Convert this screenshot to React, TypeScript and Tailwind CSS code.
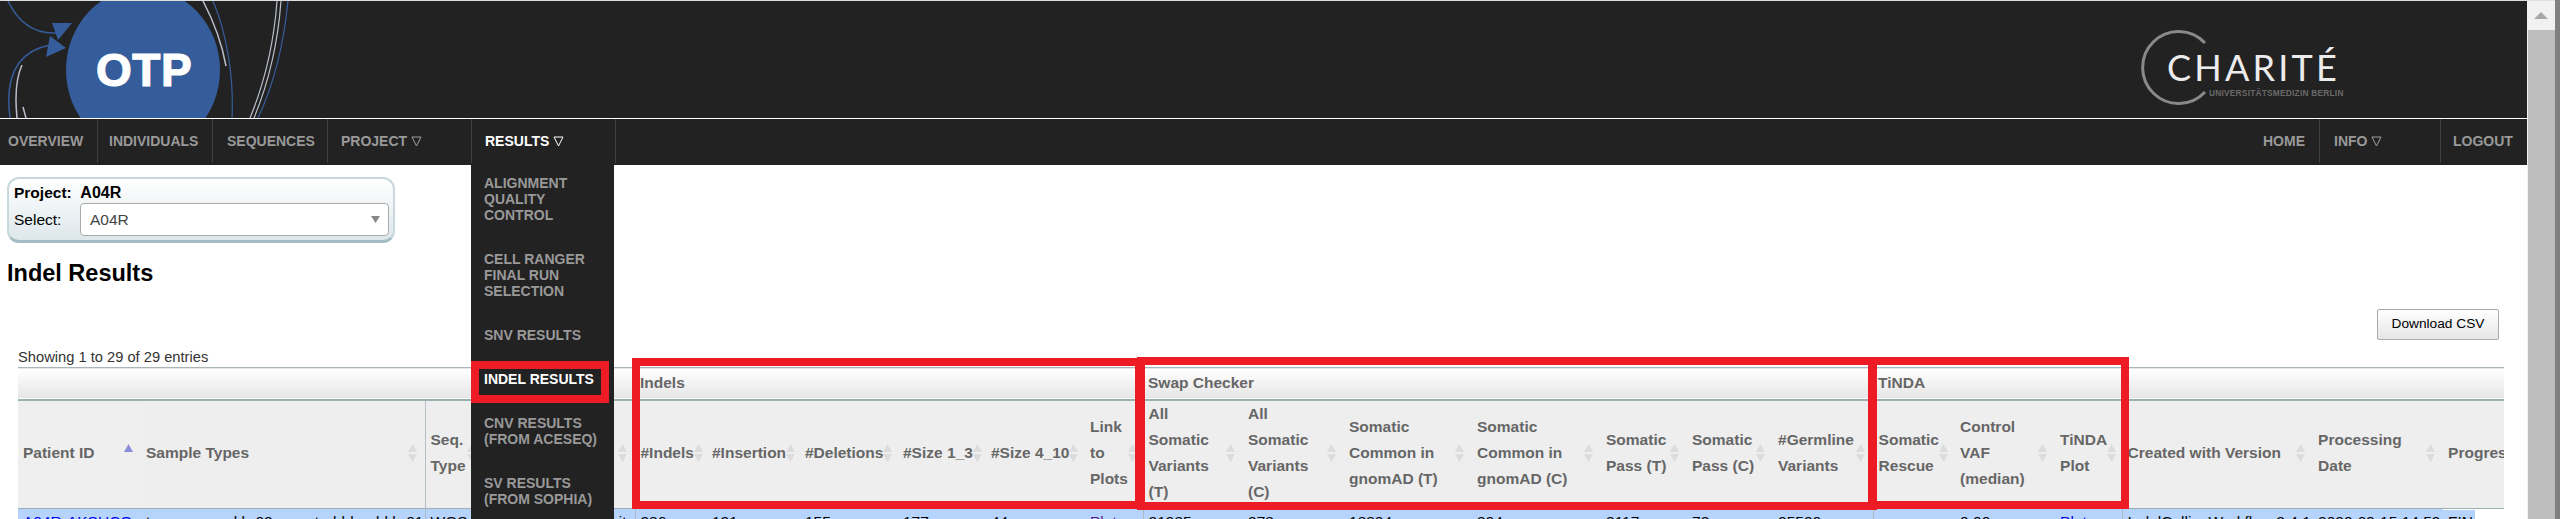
import React from "react";

const SANS = "font-['Liberation_Sans',Arial,sans-serif]";

function Triangle({ light }: { light?: boolean }) {
  return (
    <svg width="11" height="11" viewBox="0 0 11 11" className="ml-[4px] inline-block">
      <polygon points="1,1 10,1 5.5,10" fill="none" stroke={light ? "#ffffff" : "#a0a0a0"} strokeWidth="1" />
    </svg>
  );
}

function SortIcon({ active }: { active?: boolean }) {
  return (
    <svg width="9" height="20" viewBox="0 0 9 20" className="shrink-0">
      <polygon points="4.5,1 9,9 0,9" fill={active ? "#8c8cdc" : "#dcdcdc"} />
      {!active && <polygon points="0,11 9,11 4.5,19" fill="#dcdcdc" />}
    </svg>
  );
}

function OtpLogo() {
  return (
    <svg width="300" height="117" viewBox="0 1 300 117" className="shrink-0">
      <ellipse cx="143" cy="70" rx="77" ry="82" fill="#365d9b" />
      <text x="96" y="86" fill="#ffffff" fontSize="46" fontWeight="700" stroke="#ffffff" strokeWidth="1.2" letterSpacing="0.5" fontFamily="'Liberation Sans', Arial, sans-serif">
        OTP
      </text>
      {/* arrows */}
      <path d="M8 1 C18 22 34 34 56 33" fill="none" stroke="#365d9b" strokeWidth="1.5" />
      <polygon points="52,23 72,23 58,40" fill="#365d9b" />
      <path d="M10 118 C5 80 14 52 50 45" fill="none" stroke="#365d9b" strokeWidth="1.5" />
      <polygon points="50,36 66,48 46,57" fill="#365d9b" />
      <path d="M22 65 C16 78 15 98 17 118" fill="none" stroke="#b9bec9" strokeWidth="1.5" />
      <path d="M23 107 L26 118" fill="none" stroke="#b9bec9" strokeWidth="1.5" />
      {/* right side swirl */}
      <path d="M203 1 C214 22 222 44 226 66" fill="none" stroke="#b9bec9" strokeWidth="1.5" />
      <path d="M213 1 C227 34 234 78 232 118" fill="none" stroke="#365d9b" strokeWidth="1.2" />
      <path d="M277 1 C274 42 264 84 250 118" fill="none" stroke="#b9bec9" strokeWidth="1.2" />
      <path d="M281 1 C278 42 268 84 254 118" fill="none" stroke="#b9bec9" strokeWidth="1.2" />
      <path d="M288 1 C284 42 274 84 258 118" fill="none" stroke="#365d9b" strokeWidth="1.2" />
    </svg>
  );
}

function ChariteLogo() {
  return (
    <svg width="220" height="117" viewBox="2130 1 220 117" className="mr-[177px] shrink-0">
      <path d="M2205 43 A36 36 0 1 0 2205 92" fill="none" stroke="#8a8a8a" strokeWidth="3" />
      <text x="2167" y="81" fill="#ececec" fontSize="36" fontWeight="400" letterSpacing="3.2" fontFamily="Lato, sans-serif">
        CHARITÉ
      </text>
      <text x="2209" y="96" fill="#6a6a6a" fontSize="8.3" fontWeight="700" letterSpacing="0.25" fontFamily="'Liberation Sans', Arial, sans-serif">
        UNIVERSITÄTSMEDIZIN BERLIN
      </text>
    </svg>
  );
}

const leftNav = [
  { label: "OVERVIEW", w: "w-[98px]", pl: "pl-[8px]" },
  { label: "INDIVIDUALS", w: "w-[115px]", pl: "pl-[11px]" },
  { label: "SEQUENCES", w: "w-[115px]", pl: "pl-[14px]" },
  { label: "PROJECT", w: "w-[144px]", pl: "pl-[13px]", caret: true },
  { label: "RESULTS", w: "w-[144px]", pl: "pl-[13px]", caret: true, active: true },
];

const menuItems = [
  { lines: ["ALIGNMENT", "QUALITY", "CONTROL"] },
  { lines: ["CELL RANGER", "FINAL RUN", "SELECTION"] },
  { lines: ["SNV RESULTS"] },
  { lines: ["INDEL RESULTS"], active: true },
  { lines: ["CNV RESULTS", "(FROM ACESEQ)"] },
  { lines: ["SV RESULTS", "(FROM SOPHIA)"] },
];

function NavBar() {
  return (
    <div className="flex h-[46px] bg-[#222222] text-[14px] font-bold leading-4">
      {leftNav.map((item) => (
        <div
          key={item.label}
          className={`flex h-[44px] items-center border-r border-[#3f3f3f] ${item.w} ${item.pl} ${
            item.active ? "text-white" : "text-[#999999]"
          }`}
        >
          {item.label}
          {item.caret && <Triangle light={item.active} />}
        </div>
      ))}
      <div className="ml-auto flex">
        <div className="flex h-[44px] items-center border-r border-[#3f3f3f] pr-[14px] text-[#999999]">HOME</div>
        <div className="flex h-[44px] w-[121px] items-center border-r border-[#3f3f3f] pl-[14px] text-[#999999]">
          INFO
          <Triangle />
        </div>
        <div className="flex h-[44px] w-[86px] items-center pl-[12px] text-[#999999]">LOGOUT</div>
      </div>
    </div>
  );
}

function ResultsMenu() {
  return (
    <div className="absolute left-[471px] top-0 h-[354px] w-[143px] bg-[#222222] pl-[13px] pt-[10px] text-[14px] font-bold leading-4 text-[#999999]">
      {menuItems.map((item) => (
        <div key={item.lines[0]} className={`pb-[28px] ${item.active ? "text-white" : ""}`}>
          {item.lines.map((line) => (
            <div key={line}>{line}</div>
          ))}
        </div>
      ))}
    </div>
  );
}

function ProjectBox() {
  return (
    <div className="ml-[7px] flex h-[66px] w-[388px] flex-col rounded-[12px] border-2 border-b-[3px] border-[#c9d8dd] border-b-[#a4bcc2] bg-gradient-to-b from-white to-[#dde7eb] pl-[5px] pr-[4px] pt-[3px]">
      <div className="h-[21px] text-[15.5px] font-bold leading-[21px] text-black">
        Project:&nbsp; <span className="text-[16px]">A04R</span>
      </div>
      <div className="flex items-center">
        <span className="w-[66px] text-[15.5px] text-black">Select:</span>
        <div className="flex h-[33px] w-[309px] items-center justify-between rounded-[4px] border border-[#aaaaaa] bg-white pl-[9px] pr-[8px] text-[15.5px] text-[#444444]">
          A04R
          <svg width="9" height="7" viewBox="0 0 9 7">
            <polygon points="0,0 9,0 4.5,7" fill="#888888" />
          </svg>
        </div>
      </div>
    </div>
  );
}

type Col = {
  head: string[];
  width: string;
  value: string;
  link?: string;
  border?: boolean;
  sorted?: boolean;
};

const columns: Col[] = [
  { head: ["Patient ID"], width: "w-[123px]", value: "A04R-AKSUCQ", link: "text-[#0000ee]", sorted: true },
  { head: ["Sample Types"], width: "w-[284px]", value: "tumor-ovary-kb-02 – control-blood-kb-01", border: true },
  { head: ["Seq.", "Type"], width: "w-[59px]", value: "WGS" },
  { head: ["Library", "Preparation", "Kit"], width: "w-[151px]", value: "TruSeq kit", border: true },
  { head: ["#Indels"], width: "w-[72px]", value: "286" },
  { head: ["#Insertion"], width: "w-[93px]", value: "131" },
  { head: ["#Deletions"], width: "w-[98px]", value: "155" },
  { head: ["#Size 1_3"], width: "w-[88px]", value: "177" },
  { head: ["#Size 4_10"], width: "w-[99px]", value: "44" },
  { head: ["Link", "to", "Plots"], width: "w-[58px]", value: "Plots", link: "text-[#551a8b]", border: true },
  { head: ["All", "Somatic", "Variants", "(T)"], width: "w-[100px]", value: "31985" },
  { head: ["All", "Somatic", "Variants", "(C)"], width: "w-[101px]", value: "378" },
  { head: ["Somatic", "Common in", "gnomAD (T)"], width: "w-[128px]", value: "18894" },
  { head: ["Somatic", "Common in", "gnomAD (C)"], width: "w-[129px]", value: "394" },
  { head: ["Somatic", "Pass (T)"], width: "w-[86px]", value: "3117" },
  { head: ["Somatic", "Pass (C)"], width: "w-[86px]", value: "73" },
  { head: ["#Germline", "Variants"], width: "w-[100px]", value: "25530", border: true },
  { head: ["Somatic", "Rescue"], width: "w-[82px]", value: "" },
  { head: ["Control", "VAF", "(median)"], width: "w-[100px]", value: "0.00" },
  { head: ["TiNDA", "Plot"], width: "w-[67px]", value: "Plots", link: "text-[#0000ee]", border: true },
  { head: ["Created with Version"], width: "w-[191px]", value: "IndelCallingWorkflow:2.4.1" },
  { head: ["Processing", "Date"], width: "w-[130px]", value: "2020-09-15 14:59" },
  { head: ["Progress"], width: "w-[117px]", value: "FIN" },
];

const groups = [
  { label: "", span: 4 },
  { label: "Indels", span: 6 },
  { label: "Swap Checker", span: 7 },
  { label: "TiNDA", span: 3 },
  { label: "", span: 3 },
];

function ResultsTable() {
  return (
    <div className="ml-[18px] w-[2486px] overflow-hidden">
      <table className="w-[2542px] table-fixed border-collapse text-[15.5px]">
        <colgroup>
          {columns.map((c, i) => (
            <col key={i} className={c.width} />
          ))}
        </colgroup>
        <thead>
          <tr className="h-[32px] border-t border-b-2 border-t-[#a9b5b8] border-b-[#9cb0b3] bg-gradient-to-b from-white to-[#e6e6e6]">
            {groups.map((g, i) => (
              <th key={i} colSpan={g.span} className="pb-[2px] pl-[5px] text-left font-bold text-[#666666]">
                {g.label}
              </th>
            ))}
          </tr>
          <tr className="h-[109px] border-b border-[#9cb0b3] bg-[#eeeeee]">
            {columns.map((c, i) => (
              <th
                key={i}
                className={`p-0 pb-[2px] pl-[5px] pr-[8px] text-left font-bold leading-[26px] text-[#666666] ${
                  c.border ? "border-r border-[#b4c0c3]" : ""
                } ${c.sorted ? "bg-[#efefef]" : ""}`}
              >
                <div className="flex items-center justify-between whitespace-nowrap">
                  <div>
                    {c.head.map((line) => (
                      <div key={line}>{line}</div>
                    ))}
                  </div>
                  <SortIcon active={c.sorted} />
                </div>
              </th>
            ))}
          </tr>
        </thead>
        <tbody>
          <tr className="h-[26px]">
            {columns.map((c, i) =>
              c.head[0] === "Progress" ? (
                <td key={i} className="p-0 text-black">
                  <div className="w-[32px] bg-[#b5d3fb] pl-[5px]">{c.value}</div>
                </td>
              ) : (
                <td
                  key={i}
                  className={`overflow-hidden whitespace-nowrap bg-[#b5d3fb] p-0 ${
                    c.head[0] === "Library" ? "pr-[8px] text-right" : "pl-[5px]"
                  } ${c.link ?? "text-black"} ${c.border ? "border-r border-[#a9bcc4]" : ""}`}
                >
                  {c.value}
                </td>
              )
            )}
          </tr>
        </tbody>
      </table>
    </div>
  );
}

export default function App() {
  return (
    <div className={`relative flex h-[519px] overflow-hidden bg-white ${SANS}`}>
      <div className="w-[2527px] shrink-0">
        <div className="h-px bg-[#dddddd]" />
        <div className="flex h-[117px] items-start justify-between overflow-hidden bg-[#222222]">
          <OtpLogo />
          <ChariteLogo />
        </div>
        <div className="h-px bg-white" />
        <NavBar />
        <div className="relative pt-[12px]">
          <ResultsMenu />
          <ProjectBox />
          <h1 className="ml-[7px] mt-[15px] h-[30px] text-[23.5px] font-bold leading-[30px] text-black">Indel Results</h1>
          <div className="mt-[21px] flex h-[31px] justify-end pr-[28px]">
            <button className="w-[122px] rounded-[2px] border border-[#aaaaaa] bg-gradient-to-b from-white to-[#e6e6e6] text-[13.7px] text-black">
              Download CSV
            </button>
          </div>
          <div className="ml-[18px] mt-[8px] h-[19px] text-[14.7px] leading-[18px] text-[#333333]">
            Showing 1 to 29 of 29 entries
          </div>
          <ResultsTable />
        </div>
      </div>

      {/* browser scrollbar */}
      <div className="flex w-[33px] shrink-0">
        <div className="flex w-[28px] flex-col border-t border-[#dddddd] bg-[#f1f1f1]">
          <div className="flex h-[29px] items-center justify-center">
            <svg width="14" height="7" viewBox="0 0 14 7">
              <polygon points="7,0 14,7 0,7" fill="#a8a8a8" />
            </svg>
          </div>
          <div className="ml-[1px] flex-1 bg-[#bdbdbd]" />
        </div>
        <div className="flex-1 bg-[#808080]" />
      </div>

      {/* red annotation frames drawn on top of the screenshot */}
      <div className="absolute left-[471px] top-[361px] h-[42px] w-[138px] border-8 border-[#ed1c24]" />
      <div className="absolute left-[632px] top-[358px] h-[151px] w-[511px] border-8 border-[#ed1c24]" />
      <div className="absolute left-[1137px] top-[357px] h-[153px] w-[740px] border-8 border-[#ed1c24]" />
      <div className="absolute left-[1868px] top-[357px] h-[152px] w-[261px] border-8 border-[#ed1c24]" />
    </div>
  );
}
